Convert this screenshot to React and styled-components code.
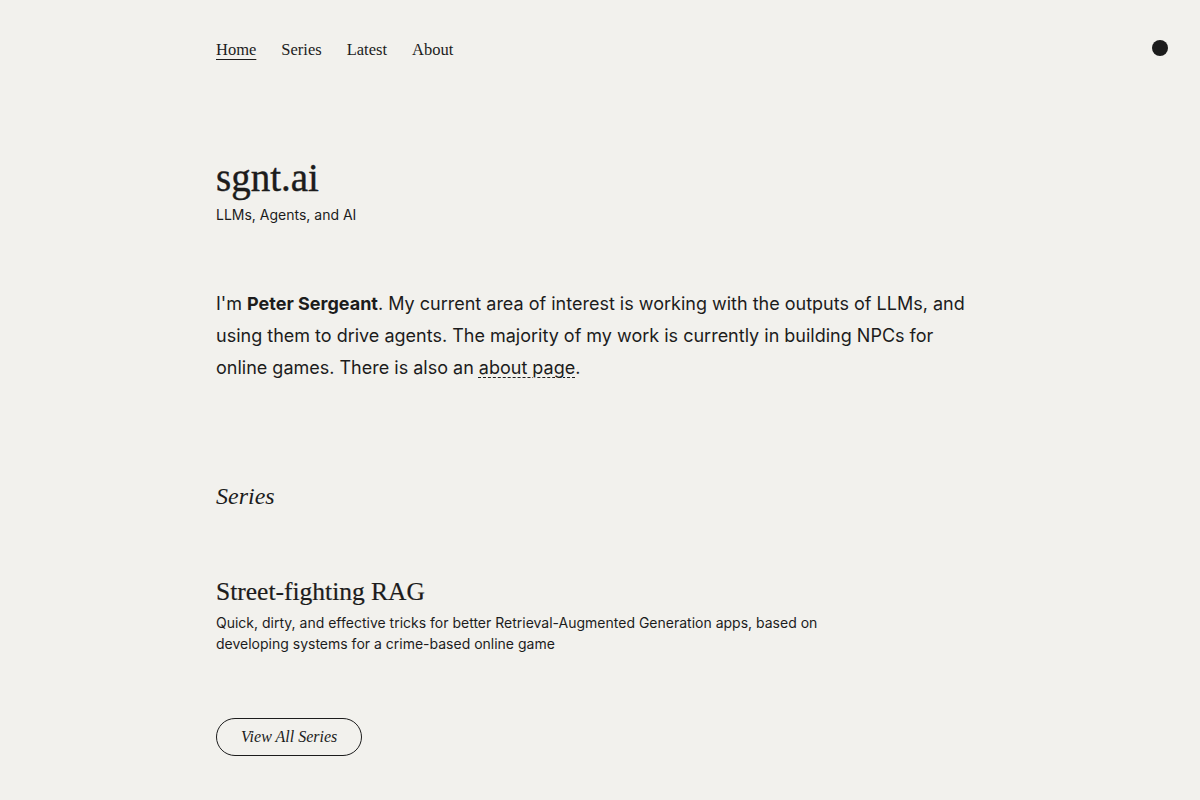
import styled, { createGlobalStyle } from "styled-components";

const GlobalStyle = createGlobalStyle`
  html, body {
    margin: 0;
    padding: 0;
    background: #f2f1ed;
    color: #1c1c1c;
  }
  body {
    font-family: Inter, "Noto Sans", sans-serif;
  }
`;

const serif = `"Liberation Serif", "DejaVu Serif", serif`;

const Page = styled.div`
  position: relative;
  min-height: 800px;
`;

const Container = styled.div`
  max-width: 768px;
  margin: 0 auto;
`;

const Nav = styled.nav`
  display: flex;
  gap: 25px;
  padding-top: 38px;
  height: 24px;
  align-items: center;
`;

const NavLink = styled.a`
  font-family: ${serif};
  font-size: 16.5px;
  color: #1c1c1c;
  text-decoration: ${(p) => (p.$active ? "underline" : "none")};
  text-underline-offset: 4px;
  text-decoration-thickness: 1px;
  cursor: pointer;
`;

const ThemeDot = styled.button`
  position: absolute;
  top: 40px;
  right: 32px;
  width: 16px;
  height: 16px;
  border-radius: 50%;
  border: none;
  padding: 0;
  background: #1c1c1c;
`;

const Header = styled.header`
  margin-top: 96px;
`;

const SiteTitle = styled.h1`
  font-family: ${serif};
  font-weight: 400;
  font-size: 39px;
  line-height: 40px;
  margin: 0;
  -webkit-text-stroke: 0.4px #1c1c1c;
`;

const Tagline = styled.p`
  font-size: 14px;
  margin: 7px 0 0;
  line-height: 20px;
`;

const Intro = styled.p`
  font-size: 18px;
  line-height: 32px;
  margin: 63px 0 0;
`;

const AboutLink = styled.a`
  color: inherit;
  text-decoration: underline dashed;
  text-decoration-thickness: 1px;
  text-underline-offset: 3px;
`;

const SectionTitle = styled.h2`
  font-family: ${serif};
  font-style: italic;
  font-weight: 400;
  font-size: 24px;
  line-height: 32px;
  margin: 96px 0 0;
`;

const SeriesItem = styled.article`
  margin-top: 64px;
`;

const SeriesTitle = styled.h3`
  font-family: ${serif};
  font-weight: 400;
  font-size: 25.5px;
  line-height: 32px;
  margin: 0;
  -webkit-text-stroke: 0.2px #1c1c1c;
`;

const SeriesDesc = styled.p`
  font-size: 14px;
  line-height: 21px;
  margin: 4px 0 0;
  max-width: 640px;
`;

const PillButton = styled.a`
  display: inline-flex;
  align-items: center;
  justify-content: center;
  margin-top: 64px;
  height: 36px;
  padding: 0 24px;
  border: 1px solid #1c1c1c;
  border-radius: 999px;
  font-family: ${serif};
  font-style: italic;
  font-size: 16px;
  color: #1c1c1c;
  text-decoration: none;
`;

export default function App() {
  return (
    <Page>
      <GlobalStyle />
      <ThemeDot aria-label="Toggle theme" />
      <Container>
        <Nav>
          <NavLink $active>Home</NavLink>
          <NavLink>Series</NavLink>
          <NavLink>Latest</NavLink>
          <NavLink>About</NavLink>
        </Nav>

        <Header>
          <SiteTitle>sgnt.ai</SiteTitle>
          <Tagline>LLMs, Agents, and AI</Tagline>
        </Header>

        <Intro>
          I'm <strong>Peter Sergeant</strong>. My current area of interest is working with the
          outputs of LLMs, and using them to drive agents. The majority of my work is currently
          in building NPCs for online games. There is also an <AboutLink>about page</AboutLink>.
        </Intro>

        <SectionTitle>Series</SectionTitle>

        <SeriesItem>
          <SeriesTitle>Street-fighting RAG</SeriesTitle>
          <SeriesDesc>
            Quick, dirty, and effective tricks for better Retrieval-Augmented Generation apps,
            based on developing systems for a crime-based online game
          </SeriesDesc>
        </SeriesItem>

        <PillButton>View All Series</PillButton>
      </Container>
    </Page>
  );
}
